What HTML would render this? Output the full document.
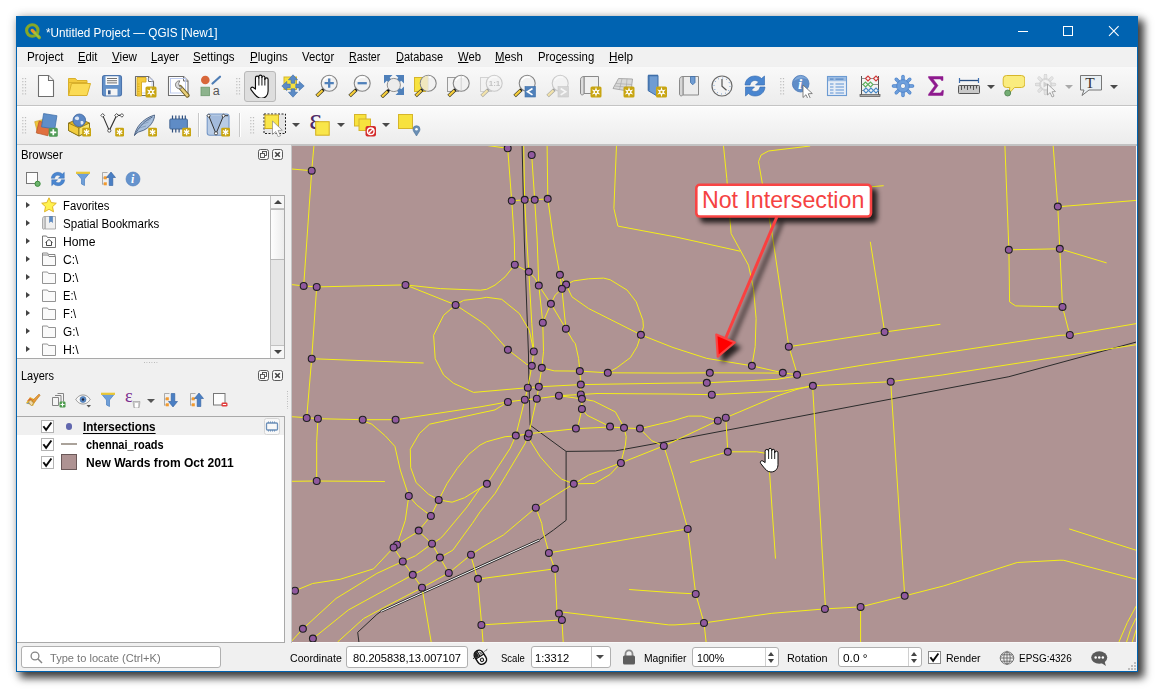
<!DOCTYPE html>
<html lang="en">
<head>
<meta charset="utf-8">
<title>*Untitled Project — QGIS [New1]</title>
<style>
*{box-sizing:border-box;margin:0;padding:0}
html,body{width:1155px;height:689px;overflow:hidden;background:#fff}
body{font-family:"Liberation Sans",sans-serif;font-size:12px;color:#000;position:relative}
.abs{position:absolute}
#win{position:absolute;left:16px;top:16px;width:1122px;height:656px;background:#F0F0F0;border:1px solid #0063B1;box-shadow:5px 5px 8px 1px rgba(0,0,0,.74), 0 0 10px rgba(0,0,0,.16)}
#title{position:absolute;left:16px;top:16px;width:1122px;height:31px;background:#0063B1;color:#fff}
#title .t{position:absolute;left:30px;top:8px;font-size:12px;white-space:nowrap;letter-spacing:-0.1px}
#menu{position:absolute;left:17px;top:47px;width:1120px;height:19px;background:#F1F1F1}
#menu span{position:absolute;top:3px;font-size:12px;white-space:nowrap}
#menu u{text-decoration-thickness:1px;text-underline-offset:1px}
.map{position:absolute;left:292px;top:146px}
#mapframe{position:absolute;left:291px;top:144px;width:846px;height:499px;background:#f8f8f8;border-top:2px solid #c2c2c2;border-left:1px solid #c6c6c6}
.tb{position:absolute;left:17px;width:1120px;background:#F0F0F0}
.grip{position:absolute;width:3px;height:18px;background-image:radial-gradient(circle,#b8b8b8 0.6px,transparent 0.9px);background-size:2px 2px}
.ic{position:absolute;width:24px;height:24px}
.dd{position:absolute;width:0;height:0;border-left:4px solid transparent;border-right:4px solid transparent;border-top:4.2px solid #4a4a4a}
.tx{font-size:12px;white-space:nowrap;line-height:14px;transform-origin:0 50%}
.st{font-size:11px}
.white{position:absolute;background:#fff;border:1px solid #a9a9a9}
.row{position:absolute;left:0;height:18px;font-size:12px;white-space:nowrap}
.sb{position:absolute;font-size:12px;white-space:nowrap;top:651px}
.inp{position:absolute;background:#fff;border:1px solid #ababab;border-radius:2px;height:21px;top:647px;font-size:12px;padding:3px 0 0 5px;white-space:nowrap}
#ttl{transform:scaleX(0.9772)}
#m0{transform:scaleX(0.9793)}
#m1{transform:scaleX(0.9371)}
#m2{transform:scaleX(0.9685)}
#m3{transform:scaleX(0.9324)}
#m4{transform:scaleX(0.9591)}
#m5{transform:scaleX(0.9625)}
#m6{transform:scaleX(0.9458)}
#m7{transform:scaleX(0.8852)}
#m8{transform:scaleX(0.9168)}
#m9{transform:scaleX(0.9400)}
#m10{transform:scaleX(0.9435)}
#m11{transform:scaleX(0.9465)}
#m12{transform:scaleX(0.9762)}
#pb{transform:scaleX(0.9474)}
#r0{transform:scaleX(0.9380)}
#r1{transform:scaleX(0.9625)}
#r2{transform:scaleX(1.0151)}
#r3{transform:scaleX(1.0102)}
#r4{transform:scaleX(1.0102)}
#r5{transform:scaleX(0.9338)}
#r6{transform:scaleX(0.9429)}
#r7{transform:scaleX(0.9803)}
#r8{transform:scaleX(1.0232)}
#pl{transform:scaleX(0.9131)}
#b1{transform:scaleX(0.9718)}
#b2{transform:scaleX(0.9161)}
#b3{transform:scaleX(1.0044)}
#loc{transform:scaleX(1.0077)}
#s1{transform:scaleX(0.9623)}
#s2{transform:scaleX(1.0088)}
#s3{transform:scaleX(0.8645)}
#s4{transform:scaleX(1.0132)}
#s5{transform:scaleX(0.9392)}
#s6{transform:scaleX(0.9701)}
#s7{transform:scaleX(0.9882)}
#s8{transform:scaleX(1.0813)}
#s9{transform:scaleX(0.9590)}
#s10{transform:scaleX(0.9072)}
</style>
</head>
<body>
<div id="win"></div>
<div id="title"></div>
<svg class="abs" style="left:24px;top:22px" width="18" height="18" viewBox="0 0 18 18"><circle cx="8.300" cy="8.500" r="5.700" fill="none" stroke="#86A828" stroke-width="3.100"/><path d="M8.300 8.500L15.300 15.500" stroke="#8DB22C" stroke-width="3.300" stroke-linecap="round"/><path d="M8 8.200L10.500 10.700" stroke="#F0902A" stroke-width="2.600" stroke-linecap="round"/><path d="M10.500 10.700L14.800 15" stroke="#A3C644" stroke-width="1.600" stroke-linecap="round"/></svg>
<svg class="abs" style="left:1000px;top:16px" width="138" height="31" viewBox="0 0 138 31"><g stroke="#fff" stroke-width="1" fill="none"><path d="M18 15.500h10"/><rect x="63.500" y="10.500" width="9" height="9"/><path d="M109 10.200l9.600 9.600M118.600 10.200l-9.600 9.600" stroke-width="1.100"/></g></svg>
<div id="menu"></div>

<div class="tb" style="top:67px;height:39px;background:linear-gradient(#f9f9f9,#ececec);border-bottom:1px solid #c4c4c4"></div>
<div class="tb" style="top:106px;height:39px;background:linear-gradient(#fbfbfb,#ececec);border-bottom:1px solid #c9c9c9;border-top:1px solid #fff"></div>
<svg class="abs" style="left:22px;top:77px" width="5" height="19" viewBox="0 0 5 19"><rect x="0.2" y="1.00" width="1.2" height="1.2" fill="#bdbdbd"/><rect x="2.9" y="1.00" width="1.2" height="1.2" fill="#bdbdbd"/><rect x="0.2" y="4.05" width="1.2" height="1.2" fill="#bdbdbd"/><rect x="2.9" y="4.05" width="1.2" height="1.2" fill="#bdbdbd"/><rect x="0.2" y="7.10" width="1.2" height="1.2" fill="#bdbdbd"/><rect x="2.9" y="7.10" width="1.2" height="1.2" fill="#bdbdbd"/><rect x="0.2" y="10.15" width="1.2" height="1.2" fill="#bdbdbd"/><rect x="2.9" y="10.15" width="1.2" height="1.2" fill="#bdbdbd"/><rect x="0.2" y="13.20" width="1.2" height="1.2" fill="#bdbdbd"/><rect x="2.9" y="13.20" width="1.2" height="1.2" fill="#bdbdbd"/><rect x="0.2" y="16.25" width="1.2" height="1.2" fill="#bdbdbd"/><rect x="2.9" y="16.25" width="1.2" height="1.2" fill="#bdbdbd"/></svg>
<svg class="abs" style="left:236px;top:77px" width="5" height="19" viewBox="0 0 5 19"><rect x="0.2" y="1.00" width="1.2" height="1.2" fill="#bdbdbd"/><rect x="2.9" y="1.00" width="1.2" height="1.2" fill="#bdbdbd"/><rect x="0.2" y="4.05" width="1.2" height="1.2" fill="#bdbdbd"/><rect x="2.9" y="4.05" width="1.2" height="1.2" fill="#bdbdbd"/><rect x="0.2" y="7.10" width="1.2" height="1.2" fill="#bdbdbd"/><rect x="2.9" y="7.10" width="1.2" height="1.2" fill="#bdbdbd"/><rect x="0.2" y="10.15" width="1.2" height="1.2" fill="#bdbdbd"/><rect x="2.9" y="10.15" width="1.2" height="1.2" fill="#bdbdbd"/><rect x="0.2" y="13.20" width="1.2" height="1.2" fill="#bdbdbd"/><rect x="2.9" y="13.20" width="1.2" height="1.2" fill="#bdbdbd"/><rect x="0.2" y="16.25" width="1.2" height="1.2" fill="#bdbdbd"/><rect x="2.9" y="16.25" width="1.2" height="1.2" fill="#bdbdbd"/></svg>
<div class="abs" style="left:244px;top:71px;width:32px;height:31px;background:#dedede;border:1px solid #b9b9b9;border-radius:3px"></div>
<svg class="abs" style="left:780px;top:77px" width="5" height="19" viewBox="0 0 5 19"><rect x="0.2" y="1.00" width="1.2" height="1.2" fill="#bdbdbd"/><rect x="2.9" y="1.00" width="1.2" height="1.2" fill="#bdbdbd"/><rect x="0.2" y="4.05" width="1.2" height="1.2" fill="#bdbdbd"/><rect x="2.9" y="4.05" width="1.2" height="1.2" fill="#bdbdbd"/><rect x="0.2" y="7.10" width="1.2" height="1.2" fill="#bdbdbd"/><rect x="2.9" y="7.10" width="1.2" height="1.2" fill="#bdbdbd"/><rect x="0.2" y="10.15" width="1.2" height="1.2" fill="#bdbdbd"/><rect x="2.9" y="10.15" width="1.2" height="1.2" fill="#bdbdbd"/><rect x="0.2" y="13.20" width="1.2" height="1.2" fill="#bdbdbd"/><rect x="2.9" y="13.20" width="1.2" height="1.2" fill="#bdbdbd"/><rect x="0.2" y="16.25" width="1.2" height="1.2" fill="#bdbdbd"/><rect x="2.9" y="16.25" width="1.2" height="1.2" fill="#bdbdbd"/></svg>
<svg class="ic" style="left:33.8px;top:74px;width:24px;height:24px" viewBox="0 0 24 24"><path d="M4.5 1.5h10l5 5v16h-15z" fill="#fff" stroke="#6e6e6e" stroke-width="1.1" stroke-linejoin="round"/><path d="M14.5 1.5v5h5" fill="#f4f4f4" stroke="#6e6e6e" stroke-width="1.1" stroke-linejoin="round"/></svg>
<svg class="ic" style="left:66.8px;top:74px;width:24px;height:24px" viewBox="0 0 24 24"><path d="M1.5 4.5h7l1.5 2h10v3h-18.5z" fill="#F4CB3E" stroke="#D9B02C" stroke-width="1"/><path d="M1.5 21.5V8.5h18.5" fill="#F4CB3E" stroke="#D9B02C"/><path d="M1.5 21.5l3-12h19l-3.5 12z" fill="#FBDB55" stroke="#D9B02C" stroke-width="1" stroke-linejoin="round"/></svg>
<svg class="ic" style="left:99.8px;top:74px;width:24px;height:24px" viewBox="0 0 24 24"><rect x="2.500" y="1.500" width="19" height="20.500" rx="2.200" fill="#6391C9" stroke="#4C74AC" stroke-width="1.100"/><rect x="5.500" y="2.300" width="13" height="8.700" fill="#fafafa"/><path d="M7 4.500h10M7 6.700h10M7 8.900h10" stroke="#333" stroke-width=".7"/><rect x="6" y="14.800" width="11.500" height="6.700" fill="#f5f5f5"/><rect x="8" y="16.300" width="2.600" height="4" fill="#3f5f8f"/></svg>
<svg class="ic" style="left:133px;top:74px;width:24px;height:24px" viewBox="0 0 24 24"><path d="M2.5 2.5h13l5 5v14h-18z" fill="#fff" stroke="#6e6e6e" stroke-width="1.1" stroke-linejoin="round"/><path d="M15.500 2.500v5h5" fill="#fff" stroke="#6e6e6e" stroke-width="1"/><rect x="6" y="5" width="13" height="14" fill="none" stroke="#b9c7ee" stroke-width=".8"/><path d="M4 3.500h9v4.500h-4.500v14h-4.500z" fill="#F6CC3C" stroke="#D6A91E" stroke-width=".9"/><path d="M4.500 10h2M4.500 12.500h2M4.500 15h2M4.500 17.500h2M4.500 20h2" stroke="#D6A91E" stroke-width=".8"/><rect x="12.5" y="12.5" width="11" height="11" rx="1.6" fill="#C8A512"/><polygon points="18.00,13.10 19.05,16.18 22.24,15.55 20.10,18.00 22.24,20.45 19.05,19.82 18.00,22.90 16.95,19.82 13.76,20.45 15.90,18.00 13.76,15.55 16.95,16.18" fill="#fff"/><circle cx="18.0" cy="18.0" r="1.15" fill="#C8A512"/></svg>
<svg class="ic" style="left:166px;top:74px;width:24px;height:24px" viewBox="0 0 24 24"><path d="M2.500 2.500h15l4.500 4.500v14.500h-19.500z" fill="#fff" stroke="#6e6e6e" stroke-width="1.1" stroke-linejoin="round"/><path d="M17.500 2.500v4.500h4.500" fill="#fff" stroke="#6e6e6e"/><rect x="4.500" y="4.500" width="15" height="14.500" fill="none" stroke="#b9c7ee" stroke-width=".9"/><path d="M14 13l7.500 8.500" stroke="#6b5a1e" stroke-width="4.200" stroke-linecap="round"/><path d="M14 13l7.300 8.300" stroke="#E9CF7A" stroke-width="2.600" stroke-linecap="round"/><path d="M13.800 6.800a4 4 0 1 0 2.500 6.800l-2.800-1.200l-.9-2.700z" fill="#ddd" stroke="#777" stroke-width=".9"/></svg>
<svg class="ic" style="left:198.5px;top:74px;width:24px;height:24px" viewBox="0 0 24 24"><circle cx="6.300" cy="6" r="4.300" fill="#D8673A"/><path d="M13.500 9.500l7.500-6.800" stroke="#4E7DB5" stroke-width="2.200" stroke-linecap="round"/><rect x="2" y="13.200" width="8.500" height="8.500" fill="#8DB38D" stroke="#6d996d" stroke-width=".8"/><text x="13.800" y="21.300" style="font-family:Liberation Sans,sans-serif;font-size:12.500px" fill="#555">a</text></svg>
<svg class="ic" style="left:247.8px;top:74px;width:24px;height:24px" viewBox="0 0 24 24"><g transform="translate(0.5,-1.2) scale(0.98)"><path d="M7.100 16.600V5.200a1.750 1.750 0 0 1 3.500 0V3.900a1.550 1.550 0 0 1 3.100 0V4.800a1.500 1.500 0 0 1 3 0V6.800a1.650 1.650 0 0 1 3.300 0V18.500c0 4-2.500 7.500-7 7.500c-3.500 0-5.500-2.500-7.500-5l-2.800-3.600c-1.200-1.600.6-3.400 2.200-2.400z" fill="#fff" stroke="#0a0a0a" stroke-width="1.150" stroke-linejoin="round"/><path d="M10.600 5V13M13.700 4.500V13M16.700 5.500V13" stroke="#0a0a0a" stroke-width="1"/></g></svg>
<svg class="ic" style="left:280.5px;top:74px;width:24px;height:24px" viewBox="0 0 24 24"><rect x="3" y="3" width="12.500" height="12.500" fill="#F7E23E" stroke="#D6B52A" stroke-width="1"/><g fill="#5A8AC6" stroke="#3F6EA8" stroke-width=".6"><path d="M12 .800l4.600 5h-2.700v3.400h-3.800V5.800H7.400z"/><path d="M12 23.200l4.600-5h-2.700v-3.400h-3.800v3.400H7.400z"/><path d="M.800 12l5-4.600v2.700h3.400v3.800H5.800v2.700z"/><path d="M23.200 12l-5-4.600v2.700h-3.400v3.800h3.400v2.700z"/></g></svg>
<svg class="ic" style="left:313.5px;top:74px;width:24px;height:24px" viewBox="0 0 24 24"><g><line x1="9.3" y1="15.7" x2="2.6" y2="22" stroke="#3a3a2a" stroke-width="3.6" stroke-linecap="butt"/><line x1="8.6" y1="16.3" x2="3" y2="21.6" stroke="#F7CE3A" stroke-width="2.2"/><circle cx="9.6" cy="15.3" r="1.4" fill="#111"/><circle cx="15.2" cy="9.2" r="8" fill="#f1f1f1" stroke="#858585" stroke-width="1.1"/><path d="M9.5 7 A6.5 6.5 0 0 1 18 3.5" fill="none" stroke="#fff" stroke-width="1.4"/></g><path d="M15.200 4.600v9.200M10.600 9.200h9.200" stroke="#4F80BA" stroke-width="2.300"/></svg>
<svg class="ic" style="left:346.5px;top:74px;width:24px;height:24px" viewBox="0 0 24 24"><g><line x1="9.3" y1="15.7" x2="2.6" y2="22" stroke="#3a3a2a" stroke-width="3.6" stroke-linecap="butt"/><line x1="8.6" y1="16.3" x2="3" y2="21.6" stroke="#F7CE3A" stroke-width="2.2"/><circle cx="9.6" cy="15.3" r="1.4" fill="#111"/><circle cx="15.2" cy="9.2" r="8" fill="#f1f1f1" stroke="#858585" stroke-width="1.1"/><path d="M9.5 7 A6.5 6.5 0 0 1 18 3.5" fill="none" stroke="#fff" stroke-width="1.4"/></g><path d="M10.600 9.200h9.200" stroke="#4F80BA" stroke-width="2.300"/></svg>
<svg class="ic" style="left:379.5px;top:74px;width:24px;height:24px" viewBox="0 0 24 24"><g fill="#4F80BA"><path d="M4 1h8.500l-2.800 2.800l3.200 3.200l-2.900 2.900l-3.200-3.200L4 9.500z"/><path d="M24 1h-8.500l2.800 2.800l-3.200 3.200l2.900 2.900l3.200-3.200L24 9.500z"/><path d="M24 21h-8.500l2.800-2.800l-3.200-3.200l2.900-2.900l3.200 3.200l2.800-2.800z"/></g><line x1="8.300" y1="16.700" x2="1.600" y2="23" stroke="#3a3a2a" stroke-width="3.600"/><line x1="7.600" y1="17.300" x2="2" y2="22.600" stroke="#F7CE3A" stroke-width="2.200"/><circle cx="8.600" cy="16.300" r="1.400" fill="#111"/><circle cx="13.800" cy="11" r="6.600" fill="#ececec" stroke="#909090" stroke-width="1"/><g fill="#4F80BA"><path d="M4 1h6l-2 2l2.500 2.500l-2.100 2.100L5.900 5.100L4 7z"/><path d="M24 1h-6l2 2l-2.500 2.500l2.100 2.100l2.500-2.500L24 7z"/><path d="M24 21h-6l2-2l-2.500-2.500l2.100-2.100l2.500 2.500l1.900-1.900z"/></g></svg>
<svg class="ic" style="left:412.5px;top:74px;width:24px;height:24px" viewBox="0 0 24 24"><rect x="1.500" y="3.500" width="11" height="14" fill="#F7E23E" stroke="#D6B52A"/><g><line x1="9.3" y1="15.7" x2="2.6" y2="22" stroke="#3a3a2a" stroke-width="3.6" stroke-linecap="butt"/><line x1="8.6" y1="16.3" x2="3" y2="21.6" stroke="#F7CE3A" stroke-width="2.2"/><circle cx="9.6" cy="15.3" r="1.4" fill="#111"/><circle cx="15.2" cy="9.2" r="8" fill="#f1f1f1" stroke="#858585" stroke-width="1.1"/><path d="M9.5 7 A6.5 6.5 0 0 1 18 3.5" fill="none" stroke="#fff" stroke-width="1.4"/></g><path d="M15.200 1.700a7.500 7.500 0 0 0 0 15z" fill="#EFE6B8" opacity=".9"/><path d="M15.200 1.500v15.400" stroke="#ddd" stroke-width=".6"/></svg>
<svg class="ic" style="left:445.5px;top:74px;width:24px;height:24px" viewBox="0 0 24 24"><rect x="1.500" y="3.500" width="11" height="14" fill="#f2f2f2" stroke="#9a9a9a"/><g><line x1="9.3" y1="15.7" x2="2.6" y2="22" stroke="#3a3a2a" stroke-width="3.6" stroke-linecap="butt"/><line x1="8.6" y1="16.3" x2="3" y2="21.6" stroke="#F7CE3A" stroke-width="2.2"/><circle cx="9.6" cy="15.3" r="1.4" fill="#111"/><circle cx="15.2" cy="9.2" r="8" fill="#f1f1f1" stroke="#858585" stroke-width="1.1"/><path d="M9.5 7 A6.5 6.5 0 0 1 18 3.5" fill="none" stroke="#fff" stroke-width="1.4"/></g><path d="M15.200 1.500v15.400" stroke="#c9c9c9" stroke-width=".8"/></svg>
<svg class="ic" style="left:478.5px;top:74px;width:24px;height:24px" viewBox="0 0 24 24"><g opacity=".38"><rect x="1.500" y="3.500" width="11" height="14" fill="#f2f2f2" stroke="#9a9a9a"/><g><line x1="9.3" y1="15.7" x2="2.6" y2="22" stroke="#3a3a2a" stroke-width="3.6" stroke-linecap="butt"/><line x1="8.6" y1="16.3" x2="3" y2="21.6" stroke="#F7CE3A" stroke-width="2.2"/><circle cx="9.6" cy="15.3" r="1.4" fill="#111"/><circle cx="15.2" cy="9.2" r="8" fill="#f1f1f1" stroke="#858585" stroke-width="1.1"/><path d="M9.5 7 A6.5 6.5 0 0 1 18 3.5" fill="none" stroke="#fff" stroke-width="1.4"/></g><text x="9.700" y="12.300" font-family="Liberation Sans,sans-serif" font-weight="bold" font-size="8" fill="#777">1:1</text></g></svg>
<svg class="ic" style="left:511.5px;top:74px;width:24px;height:24px" viewBox="0 0 24 24"><g><line x1="9.3" y1="15.7" x2="2.6" y2="22" stroke="#3a3a2a" stroke-width="3.6" stroke-linecap="butt"/><line x1="8.6" y1="16.3" x2="3" y2="21.6" stroke="#F7CE3A" stroke-width="2.2"/><circle cx="9.6" cy="15.3" r="1.4" fill="#111"/><circle cx="15.2" cy="9.2" r="8" fill="#f1f1f1" stroke="#858585" stroke-width="1.1"/><path d="M9.5 7 A6.5 6.5 0 0 1 18 3.5" fill="none" stroke="#fff" stroke-width="1.4"/></g><rect x="13" y="12.500" width="10.500" height="10.500" fill="#4F80BA" stroke="#3F6EA8" stroke-width=".6"/><path d="M20.500 14.500l-5 3.200l5 3.200" fill="none" stroke="#fff" stroke-width="1.700"/></svg>
<svg class="ic" style="left:544.5px;top:74px;width:24px;height:24px" viewBox="0 0 24 24"><g opacity=".38"><g><line x1="9.3" y1="15.7" x2="2.6" y2="22" stroke="#3a3a2a" stroke-width="3.6" stroke-linecap="butt"/><line x1="8.6" y1="16.3" x2="3" y2="21.6" stroke="#F7CE3A" stroke-width="2.2"/><circle cx="9.6" cy="15.3" r="1.4" fill="#111"/><circle cx="15.2" cy="9.2" r="8" fill="#f1f1f1" stroke="#858585" stroke-width="1.1"/><path d="M9.5 7 A6.5 6.5 0 0 1 18 3.5" fill="none" stroke="#fff" stroke-width="1.4"/></g><rect x="13" y="12.500" width="10.500" height="10.500" fill="#aaa" stroke="#888" stroke-width=".6"/><path d="M15.700 14.500l5 3.200l-5 3.200" fill="none" stroke="#fff" stroke-width="1.700"/></g></svg>
<svg class="ic" style="left:578px;top:74px;width:24px;height:24px" viewBox="0 0 24 24"><path d="M6 2.500h14.500v17H6z" fill="#f0f0f0" stroke="#8a8a8a"/><path d="M6 2.500c-3 0-3.500 2-3.500 3V19c0 2.500 3.500 2.500 3.500 0z" fill="#dcdcdc" stroke="#8a8a8a"/><rect x="12.5" y="12.5" width="11" height="11" rx="1.6" fill="#C8A512"/><polygon points="18.00,13.10 19.05,16.18 22.24,15.55 20.10,18.00 22.24,20.45 19.05,19.82 18.00,22.90 16.95,19.82 13.76,20.45 15.90,18.00 13.76,15.55 16.95,16.18" fill="#fff"/><circle cx="18.0" cy="18.0" r="1.15" fill="#C8A512"/></svg>
<svg class="ic" style="left:611px;top:74px;width:24px;height:24px" viewBox="0 0 24 24"><path d="M2 14.500l5.500-10l14 .5l-1.500 12.500z" fill="#d9d9d9" stroke="#9a9a9a" stroke-width=".8"/><path d="M5 9.500l16 1M3.500 12l16.800 1.500M11 4.700l-2.500 11M16 4.800l-1 12" stroke="#aaa" stroke-width=".7"/><rect x="12.5" y="12.5" width="11" height="11" rx="1.6" fill="#C8A512"/><polygon points="18.00,13.10 19.05,16.18 22.24,15.55 20.10,18.00 22.24,20.45 19.05,19.82 18.00,22.90 16.95,19.82 13.76,20.45 15.90,18.00 13.76,15.55 16.95,16.18" fill="#fff"/><circle cx="18.0" cy="18.0" r="1.15" fill="#C8A512"/></svg>
<svg class="ic" style="left:644.5px;top:74px;width:24px;height:24px" viewBox="0 0 24 24"><path d="M3.200 1.500h9.800v17.500l-2 2.300l-7.800-4.600z" fill="#6F9CD2" stroke="#3F6EA8" stroke-width="1" stroke-linejoin="round"/><path d="M3.200 1.500h9.800" stroke="#3F6EA8" stroke-width="1.600"/><path d="M3.900 2v14.500" stroke="#3F6EA8" stroke-width="1.200"/><rect x="11" y="12.5" width="11" height="11" rx="1.6" fill="#C8A512"/><polygon points="16.50,13.10 17.55,16.18 20.74,15.55 18.60,18.00 20.74,20.45 17.55,19.82 16.50,22.90 15.45,19.82 12.26,20.45 14.40,18.00 12.26,15.55 15.45,16.18" fill="#fff"/><circle cx="16.5" cy="18.0" r="1.15" fill="#C8A512"/></svg>
<svg class="ic" style="left:677px;top:74px;width:24px;height:24px" viewBox="0 0 24 24"><path d="M6 2.500h15.500v18.500H6z" fill="#ececec" stroke="#8a8a8a"/><path d="M6 2.500c-3 0-3.500 2-3.500 3V20c0 2.500 3.500 2.500 3.500 0z" fill="#d6d6d6" stroke="#8a8a8a"/><path d="M13.500 2.500h4.500v6l-2.250 2.300l-2.250-2.300z" fill="#6F9CD2" stroke="#3F6EA8" stroke-width=".8"/></svg>
<svg class="ic" style="left:710px;top:74px;width:24px;height:24px" viewBox="0 0 24 24"><circle cx="12" cy="12" r="10" fill="#f4f4f4" stroke="#6a6a6a" stroke-width="1.200"/><circle cx="12" cy="12" r="8" fill="none" stroke="#5A8AC6" stroke-width="1" stroke-dasharray=".9 3.290"/><path d="M12 5v7.300l4.500 4" fill="none" stroke="#555" stroke-width="1.200"/></svg>
<svg class="ic" style="left:742.7px;top:74px;width:24px;height:24px" viewBox="0 0 24 24"><g fill="#4A86D0" stroke="#2F66AD" stroke-width=".6"><path d="M2 11C2.500 5 7 2 12 2c3 0 5 1 6.500 2.500L21.500 2v9h-9l3-3c-1-1-2.200-1.500-3.700-1.500c-2.500 0-4.300 1.500-4.800 4.500z"/><path d="M22 13c-.5 6-5 9-10 9c-3 0-5-1-6.500-2.500L2.500 22v-9h9l-3 3c1 1 2.200 1.500 3.700 1.500c2.500 0 4.300-1.500 4.800-4.500z"/></g></svg>
<svg class="ic" style="left:791.3px;top:74px;width:24px;height:24px" viewBox="0 0 24 24"><circle cx="9.700" cy="9.700" r="8.300" fill="#5F8DC8" stroke="#4A79B8" stroke-width=".8"/><path d="M3 7a7.500 7.500 0 0 1 13.500-1.500c-4-2-9-1.500-13.500 1.500z" fill="#8FB3E0" opacity=".7"/><text x="7" y="15" font-family="Liberation Serif,serif" font-style="italic" font-weight="bold" font-size="15" fill="#fff">i</text><path d="M12 11l0 12.500l3-2.800l2.300 5l2.200-1l-2.300-4.900l4.100-.3z" fill="#fff" stroke="#666" stroke-width=".8" stroke-linejoin="round"/></svg>
<svg class="ic" style="left:824.7px;top:74px;width:24px;height:24px" viewBox="0 0 24 24"><rect x="2.500" y="2.500" width="19" height="19" fill="#E6EDF6" stroke="#6C9BD2" stroke-width="1.100"/><rect x="3" y="3" width="18" height="4.200" fill="#9DBDE3"/><path d="M5 5.200h3.500M10.500 5.200h8" stroke="#5A8AC6" stroke-width="1.300"/><path d="M5 10h3.500M10.500 10h8.500M5 13h3.500M10.500 13h8.500M5 16h3.500M10.500 16h8.500M5 19h3.500M10.500 19h8.500" stroke="#5F93D4" stroke-width="1.200"/></svg>
<svg class="ic" style="left:858px;top:74px;width:24px;height:24px" viewBox="0 0 24 24"><path d="M3.500 2v19M20.500 2v19" stroke="#555" stroke-width="1"/><path d="M3.500 4.500h17M3.500 10.500h17M3.500 16.500h17" stroke="#777" stroke-width=".8"/><rect x="2" y="20.500" width="20" height="2" fill="#aaa" stroke="#555" stroke-width=".7"/><path d="M7.5 4.5l2.500-2.500l2.500 2.500l-2.500 2.500z" fill="#f4f4f4" stroke="#D23A3A" stroke-width="1.100"/><path d="M15.5 4.5l2.500-2.500l2.500 2.500l-2.500 2.500z" fill="#f4f4f4" stroke="#D23A3A" stroke-width="1.100"/><path d="M5.0 10.5l2.500-2.500l2.500 2.500l-2.500 2.500z" fill="#f4f4f4" stroke="#5DB05D" stroke-width="1.100"/><path d="M10.0 10.5l2.500-2.500l2.500 2.500l-2.500 2.500z" fill="#f4f4f4" stroke="#5DB05D" stroke-width="1.100"/><path d="M5.5 16.5l2.500-2.500l2.500 2.500l-2.500 2.500z" fill="#f4f4f4" stroke="#4A8AC8" stroke-width="1.100"/><path d="M10.5 16.5l2.500-2.500l2.500 2.500l-2.500 2.500z" fill="#f4f4f4" stroke="#4A8AC8" stroke-width="1.100"/><path d="M15.5 16.5l2.500-2.500l2.500 2.500l-2.500 2.500z" fill="#f4f4f4" stroke="#4A8AC8" stroke-width="1.100"/></svg>
<svg class="ic" style="left:890.7px;top:74px;width:24px;height:24px" viewBox="0 0 24 24"><line x1="16.80" y1="12.00" x2="21.60" y2="12.00" stroke="#4A80C8" stroke-width="3.400" stroke-linecap="round"/><line x1="15.39" y1="15.39" x2="18.79" y2="18.79" stroke="#4A80C8" stroke-width="3.400" stroke-linecap="round"/><line x1="12.00" y1="16.80" x2="12.00" y2="21.60" stroke="#4A80C8" stroke-width="3.400" stroke-linecap="round"/><line x1="8.61" y1="15.39" x2="5.21" y2="18.79" stroke="#4A80C8" stroke-width="3.400" stroke-linecap="round"/><line x1="7.20" y1="12.00" x2="2.40" y2="12.00" stroke="#4A80C8" stroke-width="3.400" stroke-linecap="round"/><line x1="8.61" y1="8.61" x2="5.21" y2="5.21" stroke="#4A80C8" stroke-width="3.400" stroke-linecap="round"/><line x1="12.00" y1="7.20" x2="12.00" y2="2.40" stroke="#4A80C8" stroke-width="3.400" stroke-linecap="round"/><line x1="15.39" y1="8.61" x2="18.79" y2="5.21" stroke="#4A80C8" stroke-width="3.400" stroke-linecap="round"/><line x1="16.80" y1="12.00" x2="21.60" y2="12.00" stroke="#6E9FDC" stroke-width="2.200" stroke-linecap="round"/><line x1="15.39" y1="15.39" x2="18.79" y2="18.79" stroke="#6E9FDC" stroke-width="2.200" stroke-linecap="round"/><line x1="12.00" y1="16.80" x2="12.00" y2="21.60" stroke="#6E9FDC" stroke-width="2.200" stroke-linecap="round"/><line x1="8.61" y1="15.39" x2="5.21" y2="18.79" stroke="#6E9FDC" stroke-width="2.200" stroke-linecap="round"/><line x1="7.20" y1="12.00" x2="2.40" y2="12.00" stroke="#6E9FDC" stroke-width="2.200" stroke-linecap="round"/><line x1="8.61" y1="8.61" x2="5.21" y2="5.21" stroke="#6E9FDC" stroke-width="2.200" stroke-linecap="round"/><line x1="12.00" y1="7.20" x2="12.00" y2="2.40" stroke="#6E9FDC" stroke-width="2.200" stroke-linecap="round"/><line x1="15.39" y1="8.61" x2="18.79" y2="5.21" stroke="#6E9FDC" stroke-width="2.200" stroke-linecap="round"/><circle cx="12" cy="12" r="6.3" fill="#6E9FDC" stroke="#4A80C8" stroke-width=".8"/><circle cx="12" cy="12" r="2.6" fill="#f2f2f2" stroke="#4A80C8" stroke-width=".8"/></svg>
<svg class="ic" style="left:923.7px;top:74px;width:24px;height:24px" viewBox="0 0 24 24"><path d="M4.500 2.500h14.500v4h-1.500c-.3-1.200-1-1.500-2.500-1.500H9l5 6.500l-5.500 7.500h6.500c1.800 0 2.500-.6 3-2.500h1.500l-.5 5H4.500v-1.200l6.300-8.500L4.500 3.800z" fill="#8E1A8E" stroke="#8E1A8E" stroke-width=".5"/></svg>
<svg class="ic" style="left:957px;top:74px;width:24px;height:24px" viewBox="0 0 24 24"><path d="M2.500 6.500h19" stroke="#274D80" stroke-width="1.300"/><path d="M2.500 4v5M21.500 4v5" stroke="#3E6FB0" stroke-width="1.200"/><rect x="1.500" y="11.500" width="21" height="8" rx=".8" fill="#c9c9c9" stroke="#555" stroke-width="1"/><path d="M4.500 12v4M7.500 12v2.500M10.500 12v4M13.500 12v2.500M16.500 12v4M19.500 12v2.500" stroke="#444" stroke-width=".9"/></svg>
<svg class="ic" style="left:1001.3px;top:74px;width:24px;height:24px" viewBox="0 0 24 24"><path d="M5.500 1.500h15a3.300 3.300 0 0 1 3.300 3.300v5.400a3.300 3.300 0 0 1-3.300 3.300h-7l-5.500 6l.8-6h-3.300a3.300 3.300 0 0 1-3.300-3.300v-5.400a3.300 3.300 0 0 1 3.300-3.300z" fill="#FAEC7E" stroke="#D6B62A" stroke-width="1"/><circle cx="6.700" cy="19" r="3" fill="#74AD74" stroke="#4d7f4d" stroke-width=".8"/></svg>
<svg class="ic" style="left:1034.7px;top:74px;width:24px;height:24px" viewBox="0 0 24 24"><g opacity=".4"><line x1="15.00" y1="10.50" x2="19.50" y2="10.50" stroke="#999" stroke-width="3.400" stroke-linecap="round"/><line x1="13.68" y1="13.68" x2="16.86" y2="16.86" stroke="#999" stroke-width="3.400" stroke-linecap="round"/><line x1="10.50" y1="15.00" x2="10.50" y2="19.50" stroke="#999" stroke-width="3.400" stroke-linecap="round"/><line x1="7.32" y1="13.68" x2="4.14" y2="16.86" stroke="#999" stroke-width="3.400" stroke-linecap="round"/><line x1="6.00" y1="10.50" x2="1.50" y2="10.50" stroke="#999" stroke-width="3.400" stroke-linecap="round"/><line x1="7.32" y1="7.32" x2="4.14" y2="4.14" stroke="#999" stroke-width="3.400" stroke-linecap="round"/><line x1="10.50" y1="6.00" x2="10.50" y2="1.50" stroke="#999" stroke-width="3.400" stroke-linecap="round"/><line x1="13.68" y1="7.32" x2="16.86" y2="4.14" stroke="#999" stroke-width="3.400" stroke-linecap="round"/><line x1="15.00" y1="10.50" x2="19.50" y2="10.50" stroke="#d0d0d0" stroke-width="2.200" stroke-linecap="round"/><line x1="13.68" y1="13.68" x2="16.86" y2="16.86" stroke="#d0d0d0" stroke-width="2.200" stroke-linecap="round"/><line x1="10.50" y1="15.00" x2="10.50" y2="19.50" stroke="#d0d0d0" stroke-width="2.200" stroke-linecap="round"/><line x1="7.32" y1="13.68" x2="4.14" y2="16.86" stroke="#d0d0d0" stroke-width="2.200" stroke-linecap="round"/><line x1="6.00" y1="10.50" x2="1.50" y2="10.50" stroke="#d0d0d0" stroke-width="2.200" stroke-linecap="round"/><line x1="7.32" y1="7.32" x2="4.14" y2="4.14" stroke="#d0d0d0" stroke-width="2.200" stroke-linecap="round"/><line x1="10.50" y1="6.00" x2="10.50" y2="1.50" stroke="#d0d0d0" stroke-width="2.200" stroke-linecap="round"/><line x1="13.68" y1="7.32" x2="16.86" y2="4.14" stroke="#d0d0d0" stroke-width="2.200" stroke-linecap="round"/><circle cx="10.5" cy="10.5" r="6.0" fill="#d0d0d0" stroke="#999" stroke-width=".8"/><circle cx="10.5" cy="10.5" r="5" fill="#f2f2f2" stroke="#999" stroke-width=".8"/><path d="M8.500 7.500l5 3l-5 3z" fill="#999"/><path d="M12.5 10l0 11l2.600-2.400l2 4.400l1.900-.9l-2-4.300l3.500-.3z" fill="#fff" stroke="#222" stroke-width=".9" stroke-linejoin="round"/></g></svg>
<svg class="ic" style="left:1079px;top:74px;width:24px;height:24px" viewBox="0 0 24 24"><path d="M1.500 1.500h21v14.500h-12.500l-7 5.500l2-5.500h-3.500z" fill="#E9EFF3" stroke="#777" stroke-width="1"/><text x="6.300" y="13.800" font-family="Liberation Serif,serif" font-size="15.500" fill="#333">T</text></svg>
<div class="dd" style="left:986.7px;top:84.5px"></div>
<div class="dd" style="border-top-color:#a9a9a9;left:1065px;top:84.5px"></div>
<div class="dd" style="left:1110.3px;top:84.5px"></div>
<svg class="abs" style="left:22px;top:116px" width="5" height="19" viewBox="0 0 5 19"><rect x="0.2" y="1.00" width="1.2" height="1.2" fill="#bdbdbd"/><rect x="2.9" y="1.00" width="1.2" height="1.2" fill="#bdbdbd"/><rect x="0.2" y="4.05" width="1.2" height="1.2" fill="#bdbdbd"/><rect x="2.9" y="4.05" width="1.2" height="1.2" fill="#bdbdbd"/><rect x="0.2" y="7.10" width="1.2" height="1.2" fill="#bdbdbd"/><rect x="2.9" y="7.10" width="1.2" height="1.2" fill="#bdbdbd"/><rect x="0.2" y="10.15" width="1.2" height="1.2" fill="#bdbdbd"/><rect x="2.9" y="10.15" width="1.2" height="1.2" fill="#bdbdbd"/><rect x="0.2" y="13.20" width="1.2" height="1.2" fill="#bdbdbd"/><rect x="2.9" y="13.20" width="1.2" height="1.2" fill="#bdbdbd"/><rect x="0.2" y="16.25" width="1.2" height="1.2" fill="#bdbdbd"/><rect x="2.9" y="16.25" width="1.2" height="1.2" fill="#bdbdbd"/></svg>
<svg class="ic" style="left:33.8px;top:113px;width:24px;height:24px" viewBox="0 0 24 24"><rect x="2" y="7" width="12" height="12" fill="#F0C63A" stroke="#C9A11E" stroke-width=".6" transform="rotate(-14 8 13)"/><rect x="3.500" y="9.500" width="12" height="12" fill="#E0703F" stroke="#B04E25" stroke-width=".6" transform="rotate(14 9.500 15.500)"/><rect x="8.500" y="1.500" width="13.500" height="13.500" fill="#5F8FC9" stroke="#3F6EA8" stroke-width=".7" transform="rotate(9 15 8)"/><rect x="14.800" y="14.800" width="9" height="9" rx="1.500" fill="#4F9A55"/><path d="M19.300 16.300v6M16.300 19.300h6" stroke="#fff" stroke-width="1.700"/></svg>
<svg class="ic" style="left:66.8px;top:113px;width:24px;height:24px" viewBox="0 0 24 24"><path d="M1.500 10l10.500-4.500l10.500 4.500v7.500l-10.500 5.500l-10.500-5.500z" fill="#E3B41F" stroke="#7a6510" stroke-width=".8" stroke-linejoin="round"/><path d="M1.500 10l10.500 5v8l-10.500-5.500z" fill="#F1CC3D" stroke="#7a6510" stroke-width=".7"/><path d="M12 15l10.500-5v7.500l-10.500 5.500z" fill="#F7E36A" stroke="#7a6510" stroke-width=".7"/><circle cx="12.300" cy="7.300" r="6.300" fill="#5B87C5" stroke="#3c639c" stroke-width=".8"/><path d="M8 4.500c1.500-1.500 3.500-1.200 4 .3s-.8 2.800-2.200 2.300s-2.500-1-1.800-2.600zM13.500 8.500c1.200-.8 3.300-.3 3 1.200s-1.500 2.200-2.700 1.500z" fill="#dfe8f5"/><rect x="15.2" y="14.8" width="8.800" height="8.800" rx="1.300" fill="#C8A512"/><g stroke="#fff" stroke-width="1.350"><line x1="19.60" y1="22.30" x2="19.60" y2="16.10"/><line x1="16.92" y1="20.75" x2="22.28" y2="17.65"/><line x1="16.92" y1="17.65" x2="22.28" y2="20.75"/></g></svg>
<svg class="ic" style="left:99.8px;top:113px;width:24px;height:24px" viewBox="0 0 24 24"><path d="M2.700 2.400l6.600 15.200l7.300-15.200h5.900" fill="none" stroke="#333" stroke-width="1.100"/><g fill="#fff" stroke="#333" stroke-width=".8"><rect x="1.400" y="1.100" width="2.600" height="2.600" transform="rotate(45 2.700 2.400)"/><rect x="15.300" y="1.100" width="2.600" height="2.600" transform="rotate(45 16.600 2.400)"/><rect x="20.600" y="1.100" width="2.600" height="2.600" transform="rotate(45 21.900 2.400)"/><circle cx="9.300" cy="17.600" r="1.600"/></g><rect x="15.2" y="14.8" width="8.800" height="8.800" rx="1.300" fill="#C8A512"/><g stroke="#fff" stroke-width="1.350"><line x1="19.60" y1="22.30" x2="19.60" y2="16.10"/><line x1="16.92" y1="20.75" x2="22.28" y2="17.65"/><line x1="16.92" y1="17.65" x2="22.28" y2="20.75"/></g></svg>
<svg class="ic" style="left:133px;top:113px;width:24px;height:24px" viewBox="0 0 24 24"><path d="M1.500 22.500c1-7 7-16.500 20-20.500c.5 4-4 14-14.500 16.500c-2 .5-4 2-5.500 4z" fill="#A9C0DC" stroke="#4a5f7f" stroke-width=".9" stroke-linejoin="round"/><path d="M1.500 22.500C6 13.500 12 7.500 19.500 4" fill="none" stroke="#4a5f7f" stroke-width=".9"/><path d="M6 15l7-2M8.500 11.500l7-2.500M11.500 8.500l6-2" stroke="#6f88ab" stroke-width=".6"/><rect x="15.2" y="14.8" width="8.800" height="8.800" rx="1.300" fill="#C8A512"/><g stroke="#fff" stroke-width="1.350"><line x1="19.60" y1="22.30" x2="19.60" y2="16.10"/><line x1="16.92" y1="20.75" x2="22.28" y2="17.65"/><line x1="16.92" y1="17.65" x2="22.28" y2="20.75"/></g></svg>
<svg class="ic" style="left:166.9px;top:113px;width:24px;height:24px" viewBox="0 0 24 24"><rect x="2.800" y="6" width="17.600" height="10" rx="1" fill="#5F8CC6" stroke="#3f628f" stroke-width=".9"/><path d="M5.500 2.500v3.500M8.800 2.500v3.500M12.100 2.500v3.500M15.400 2.500v3.500M18.300 2.500v3.500M5.500 16v3.500M8.800 16v3.500M12.100 16v3.500" stroke="#2f4f7f" stroke-width="1.200"/><rect x="15.2" y="14.8" width="8.800" height="8.800" rx="1.300" fill="#C8A512"/><g stroke="#fff" stroke-width="1.350"><line x1="19.60" y1="22.30" x2="19.60" y2="16.10"/><line x1="16.92" y1="20.75" x2="22.28" y2="17.65"/><line x1="16.92" y1="17.65" x2="22.28" y2="20.75"/></g></svg>
<svg class="ic" style="left:206px;top:113px;width:24px;height:24px" viewBox="0 0 24 24"><rect x="1.200" y="1" width="21.800" height="21.300" rx="2.500" fill="#B9CCE5" stroke="#7496C6" stroke-width="1.100"/><path d="M2.700 2.700l7.300 18l7.500-18h4.500" fill="#A3BBDC" stroke="#333" stroke-width="1"/><g fill="#fff" stroke="#333" stroke-width=".8"><rect x="1.500" y="1.500" width="2.400" height="2.400" transform="rotate(45 2.700 2.700)"/><rect x="16.300" y="1.500" width="2.400" height="2.400" transform="rotate(45 17.500 2.700)"/><circle cx="10" cy="20.300" r="1.600"/></g><rect x="15.2" y="14.8" width="8.800" height="8.800" rx="1.300" fill="#C8A512"/><g stroke="#fff" stroke-width="1.350"><line x1="19.60" y1="22.30" x2="19.60" y2="16.10"/><line x1="16.92" y1="20.75" x2="22.28" y2="17.65"/><line x1="16.92" y1="17.65" x2="22.28" y2="20.75"/></g></svg>
<svg class="ic" style="left:263.2px;top:113px;width:24px;height:24px" viewBox="0 0 24 24"><rect x="1" y="1" width="21.500" height="19.500" fill="#e6e6e6" stroke="#222" stroke-width="1" stroke-dasharray="2 1.500"/><rect x="2" y="2" width="13.500" height="13.500" fill="#F9E64A" stroke="#D2AE1E" stroke-width="1"/><path d="M9.500 8l0 13.500l3.200-3l2.500 5.300l2.300-1.100l-2.500-5.200l4.300-.3z" fill="#fff" stroke="#777" stroke-width=".6" stroke-linejoin="round"/></svg>
<svg class="ic" style="left:306.8px;top:113px;width:24px;height:24px" viewBox="0 0 24 24"><text x="2.200" y="15.700" font-family="Liberation Serif,serif" font-size="29" fill="#4E2A66">ε</text><rect x="8.700" y="8.700" width="13.500" height="13.500" fill="#F9E64A" stroke="#D2AE1E" stroke-width="1"/></svg>
<svg class="ic" style="left:353px;top:113px;width:24px;height:24px" viewBox="0 0 24 24"><rect x="1.500" y="1.500" width="11.500" height="11.500" fill="#F7E23E" stroke="#D6B52A"/><rect x="6" y="6" width="11.500" height="11.500" fill="#F7E23E" stroke="#D6B52A"/><rect x="12.500" y="13" width="10.500" height="10.500" rx="2" fill="#D42A2A"/><circle cx="17.750" cy="18.250" r="3.300" fill="none" stroke="#fff" stroke-width="1.400"/><path d="M15.500 20.500l4.500-4.500" stroke="#fff" stroke-width="1.400"/></svg>
<svg class="ic" style="left:396.9px;top:113px;width:24px;height:24px" viewBox="0 0 24 24"><rect x="1.500" y="1.500" width="14" height="14" fill="#F7E23E" stroke="#D6B52A"/><path d="M19.500 23c-1.500-3-3.500-4.500-3.500-6.800a3.500 3.500 0 0 1 7 0c0 2.300-2 3.800-3.500 6.800z" fill="#6A8FB5" stroke="#4a6f95" stroke-width=".6"/><circle cx="19.500" cy="16.200" r="1.300" fill="#fff"/></svg>
<div class="abs" style="left:198px;top:113px;width:1px;height:24px;background:#c8c8c8"></div><div class="abs" style="left:199px;top:113px;width:1px;height:24px;background:#fff"></div>
<div class="abs" style="left:238.5px;top:113px;width:1px;height:24px;background:#c8c8c8"></div><div class="abs" style="left:239.5px;top:113px;width:1px;height:24px;background:#fff"></div>
<svg class="abs" style="left:250px;top:116px" width="5" height="19" viewBox="0 0 5 19"><rect x="0.2" y="1.00" width="1.2" height="1.2" fill="#bdbdbd"/><rect x="2.9" y="1.00" width="1.2" height="1.2" fill="#bdbdbd"/><rect x="0.2" y="4.05" width="1.2" height="1.2" fill="#bdbdbd"/><rect x="2.9" y="4.05" width="1.2" height="1.2" fill="#bdbdbd"/><rect x="0.2" y="7.10" width="1.2" height="1.2" fill="#bdbdbd"/><rect x="2.9" y="7.10" width="1.2" height="1.2" fill="#bdbdbd"/><rect x="0.2" y="10.15" width="1.2" height="1.2" fill="#bdbdbd"/><rect x="2.9" y="10.15" width="1.2" height="1.2" fill="#bdbdbd"/><rect x="0.2" y="13.20" width="1.2" height="1.2" fill="#bdbdbd"/><rect x="2.9" y="13.20" width="1.2" height="1.2" fill="#bdbdbd"/><rect x="0.2" y="16.25" width="1.2" height="1.2" fill="#bdbdbd"/><rect x="2.9" y="16.25" width="1.2" height="1.2" fill="#bdbdbd"/></svg>
<div class="dd" style="left:292.1px;top:123px"></div>
<div class="dd" style="left:336.8px;top:123px"></div>
<div class="dd" style="left:381.8px;top:123px"></div>

<svg class="abs" style="left:258px;top:149px" width="25" height="11" viewBox="0 0 25 11"><rect x=".5" y=".5" width="10" height="10" rx="2" fill="#f8f8f8" stroke="#4a4a4a" stroke-width=".9"/><rect x="4.500" y="2.500" width="4" height="4" fill="none" stroke="#4a4a4a" stroke-width=".9"/><rect x="2.500" y="4.500" width="4" height="4" fill="#f8f8f8" stroke="#4a4a4a" stroke-width=".9"/><rect x="14.500" y=".5" width="10" height="10" rx="2" fill="#f8f8f8" stroke="#4a4a4a" stroke-width=".9"/><path d="M17.200 3.200l4.600 4.600M21.800 3.200l-4.600 4.600" stroke="#444" stroke-width="1.600"/></svg>
<svg class="abs" style="left:24.5px;top:171.3px" width="16" height="16" viewBox="0 0 16 16"><rect x="1.500" y="1.500" width="11" height="11" fill="#fdfdfd" stroke="#777" stroke-width="1"/><circle cx="12.600" cy="12.800" r="2.600" fill="#6DB36D" stroke="#3e8e3e" stroke-width="1"/></svg>
<svg class="abs" style="left:50px;top:171.3px" width="16" height="16" viewBox="0 0 16 16"><g fill="#4A86D0" stroke="#2F66AD" stroke-width=".4"><path d="M1.300 7.300C1.700 3.300 4.700 1.300 8 1.300c2 0 3.300.7 4.300 1.700l2-1.700v6h-6l2-2c-.7-.7-1.500-1-2.500-1c-1.700 0-2.900 1-3.200 3z"/><path d="M14.700 8.700c-.4 4-3.400 6-6.700 6c-2 0-3.300-.7-4.300-1.700l-2 1.700v-6h6l-2 2c.7.700 1.500 1 2.500 1c1.700 0 2.900-1 3.200-3z"/></g></svg>
<svg class="abs" style="left:74.5px;top:171.3px" width="16" height="16" viewBox="0 0 16 16"><path d="M1.500 2h13l-5 6v6.500l-3-1.500V8z" fill="#6F9FD8" stroke="#4A7FC0" stroke-width=".7"/><path d="M1 1.800h14" stroke="#EBC835" stroke-width="2.200"/></svg>
<svg class="abs" style="left:100.3px;top:171.3px" width="16" height="16" viewBox="0 0 16 16"><path d="M2.500 1.500h5M2.500 1.500v12M2.500 7h2M2.500 13h2" stroke="#999" stroke-width=".8" fill="none"/><rect x="3.800" y="5.300" width="3" height="3" fill="#F29A2E"/><rect x="3.800" y="11.300" width="3" height="3" fill="#F29A2E"/><path d="M11 1l4.500 5.500h-2.700v8h-3.600v-8H6.500z" fill="#4A7FC4" stroke="#2F5E9E" stroke-width=".6"/></svg>
<svg class="abs" style="left:124.6px;top:171.3px" width="16" height="16" viewBox="0 0 16 16"><circle cx="8" cy="8" r="7" fill="#6593CD" stroke="#4A7ABA" stroke-width=".6"/><text x="6" y="12.300" font-family="Liberation Serif,serif" font-style="italic" font-weight="bold" font-size="12" fill="#fff">i</text></svg>
<div class="white" style="left:17px;top:195px;width:268px;height:164px;border-left:none"></div>
<div class="abs" style="left:270px;top:196px;width:14px;height:162px;background:#e6e6e6;border-left:1px solid #c2c2c2"></div>
<div class="abs" style="left:270px;top:196px;width:14px;height:13px;background:#f6f6f6;border:1px solid #c2c2c2;border-top:none;border-right:none"></div>
<div class="abs" style="left:270px;top:209px;width:14px;height:51px;background:linear-gradient(90deg,#fdfdfd,#ececec);border:1px solid #b9b9b9;border-right:none"></div>
<div class="abs" style="left:270px;top:345px;width:14px;height:13px;background:#f6f6f6;border-left:1px solid #c2c2c2;border-top:1px solid #c2c2c2"></div>
<div class="abs" style="left:273.500px;top:200px;border-left:4px solid transparent;border-right:4px solid transparent;border-bottom:4.500px solid #444;width:0;height:0"></div>
<div class="abs" style="left:273.500px;top:350px;border-left:4px solid transparent;border-right:4px solid transparent;border-top:4.500px solid #444;width:0;height:0"></div>
<div class="abs" style="left:26px;top:201.5px;width:0;height:0;border-top:3.500px solid transparent;border-bottom:3.500px solid transparent;border-left:4px solid #444"></div>
<svg class="abs" style="left:40.7px;top:197px" width="16" height="16" viewBox="0 0 16 16"><path d="M8 .8l2.200 4.800l5.100.6l-3.800 3.500l1 5.100L8 12.300l-4.500 2.500l1-5.100L.700 6.200l5.100-.6z" fill="#FFF250" stroke="#DDAE1C" stroke-width=".9" stroke-linejoin="round"/></svg>

<div class="abs" style="left:26px;top:219.5px;width:0;height:0;border-top:3.500px solid transparent;border-bottom:3.500px solid transparent;border-left:4px solid #444"></div>
<svg class="abs" style="left:40.7px;top:215px" width="16" height="16" viewBox="0 0 16 16"><path d="M4 1.500h10.500v12.500H4z" fill="#f0f0f0" stroke="#9a9a9a" stroke-width=".8"/><path d="M4 1.500c-2 0-2.500 1.300-2.500 2V13c0 1.700 2.500 1.700 2.500 0z" fill="#dcdcdc" stroke="#9a9a9a" stroke-width=".8"/><path d="M8.500 1.500h3v6l-1.500-1.500l-1.500 1.500z" fill="#5A8AC6" stroke="#3F6EA8" stroke-width=".5"/></svg>

<div class="abs" style="left:26px;top:237.5px;width:0;height:0;border-top:3.500px solid transparent;border-bottom:3.500px solid transparent;border-left:4px solid #444"></div>
<svg class="abs" style="left:40.7px;top:233px" width="16" height="16" viewBox="0 0 16 16"><path d="M1.500 3h4l1 1.500h8v10h-13z" fill="#fcfcfc" stroke="#666" stroke-width=".9"/><path d="M4.500 9.500L8 6.500l3.500 3M5.500 9v3.500h5V9" fill="none" stroke="#333" stroke-width=".9"/></svg>

<div class="abs" style="left:26px;top:255.5px;width:0;height:0;border-top:3.500px solid transparent;border-bottom:3.500px solid transparent;border-left:4px solid #444"></div>
<svg class="abs" style="left:40.7px;top:251px" width="16" height="16" viewBox="0 0 16 16"><path d="M1.500 2h5l1 1.500h6.500v2" fill="none" stroke="#777" stroke-width=".9"/><path d="M1.500 2v12.500h13v-9h-6.500l-1-1.500h-5.500" fill="#fafafa" stroke="#777" stroke-width=".9"/></svg>

<div class="abs" style="left:26px;top:273.5px;width:0;height:0;border-top:3.500px solid transparent;border-bottom:3.500px solid transparent;border-left:4px solid #444"></div>
<svg class="abs" style="left:40.7px;top:269px" width="16" height="16" viewBox="0 0 16 16"><path d="M1.500 3h5l1 1.500h7v10h-13z" fill="#fafafa" stroke="#888" stroke-width=".9"/></svg>

<div class="abs" style="left:26px;top:291.5px;width:0;height:0;border-top:3.500px solid transparent;border-bottom:3.500px solid transparent;border-left:4px solid #444"></div>
<svg class="abs" style="left:40.7px;top:287px" width="16" height="16" viewBox="0 0 16 16"><path d="M1.500 3h5l1 1.500h7v10h-13z" fill="#fafafa" stroke="#888" stroke-width=".9"/></svg>

<div class="abs" style="left:26px;top:309.5px;width:0;height:0;border-top:3.500px solid transparent;border-bottom:3.500px solid transparent;border-left:4px solid #444"></div>
<svg class="abs" style="left:40.7px;top:305px" width="16" height="16" viewBox="0 0 16 16"><path d="M1.500 3h5l1 1.500h7v10h-13z" fill="#fafafa" stroke="#888" stroke-width=".9"/></svg>

<div class="abs" style="left:26px;top:327.5px;width:0;height:0;border-top:3.500px solid transparent;border-bottom:3.500px solid transparent;border-left:4px solid #444"></div>
<svg class="abs" style="left:40.7px;top:323px" width="16" height="16" viewBox="0 0 16 16"><path d="M1.500 3h5l1 1.500h7v10h-13z" fill="#fafafa" stroke="#888" stroke-width=".9"/></svg>

<div class="abs" style="left:26px;top:345.5px;width:0;height:0;border-top:3.500px solid transparent;border-bottom:3.500px solid transparent;border-left:4px solid #444"></div>
<svg class="abs" style="left:40.7px;top:341px" width="16" height="16" viewBox="0 0 16 16"><path d="M1.500 3h5l1 1.500h7v10h-13z" fill="#fafafa" stroke="#888" stroke-width=".9"/></svg>

<div class="abs" style="left:144px;top:362px;width:15px;height:1px;background-image:linear-gradient(90deg,#b5b5b5 1px,transparent 1px);background-size:2.500px 1px"></div>

<svg class="abs" style="left:258px;top:370px" width="25" height="11" viewBox="0 0 25 11"><rect x=".5" y=".5" width="10" height="10" rx="2" fill="#f8f8f8" stroke="#4a4a4a" stroke-width=".9"/><rect x="4.500" y="2.500" width="4" height="4" fill="none" stroke="#4a4a4a" stroke-width=".9"/><rect x="2.500" y="4.500" width="4" height="4" fill="#f8f8f8" stroke="#4a4a4a" stroke-width=".9"/><rect x="14.500" y=".5" width="10" height="10" rx="2" fill="#f8f8f8" stroke="#4a4a4a" stroke-width=".9"/><path d="M17.200 3.200l4.600 4.600M21.800 3.200l-4.600 4.600" stroke="#444" stroke-width="1.600"/></svg>
<svg class="abs" style="left:25px;top:392px" width="16" height="16" viewBox="0 0 16 16"><path d="M1 11l4-6l6 3l-3 6z" fill="#E8B92C"/><path d="M2 9l3-3l3 2z" fill="#D8673A"/><path d="M1 12l5-3l2 2z" fill="#5A8AC6"/><path d="M7 9l7-7l1.200 1.200l-6 7.500z" fill="#E59A3A" stroke="#b5701a" stroke-width=".5"/><path d="M5.500 8l3 3l-2 3l-3-4z" fill="#f1d9a8" stroke="#9a7a3a" stroke-width=".5"/></svg>
<svg class="abs" style="left:50px;top:392px" width="16" height="16" viewBox="0 0 16 16"><path d="M2.500 5.500h6v8h-6zM5 3.500h6v8M7.500 1.500h6v8" fill="#f4f4f4" stroke="#777" stroke-width=".9"/><rect x="9.500" y="9.500" width="6" height="6" rx="1.200" fill="#4A9A4A"/><path d="M12.500 10.500v4M10.500 12.500h4" stroke="#fff" stroke-width="1.200"/></svg>
<svg class="abs" style="left:75px;top:392px" width="16" height="16" viewBox="0 0 16 16"><path d="M.8 7.500C3 4 5.500 3 8 3s5 1 7.200 4.500C13 11 10.500 12 8 12S3 11 .8 7.500z" fill="#f6f6f6" stroke="#8a8a8a" stroke-width=".9"/><circle cx="8" cy="7.500" r="3" fill="#5A8AC6" stroke="#3F6EA8" stroke-width=".6"/><circle cx="8" cy="7.500" r="1.200" fill="#223"/><path d="M11.500 13h4.500l-2.250 2.500z" fill="#555"/></svg>
<svg class="abs" style="left:99.6px;top:392px" width="16" height="16" viewBox="0 0 16 16"><path d="M1.500 2h13l-5 6v6.500l-3-1.500V8z" fill="#6F9FD8" stroke="#4A7FC0" stroke-width=".7"/><path d="M1 1.800h14" stroke="#EBC835" stroke-width="2.200"/></svg>
<svg class="abs" style="left:124.6px;top:392px" width="16" height="16" viewBox="0 0 16 16"><text x="0" y="10" font-family="Liberation Serif,serif" font-size="18" fill="#7A2C8E">ε</text><path d="M8 9.500h7l-.8 6h-5.400z" fill="#cfcfcf" stroke="#999" stroke-width=".6"/><rect x="10" y="11" width="3" height="4.500" fill="#fff"/></svg>
<div class="dd" style="left:147.100px;top:398.500px;border-top-color:#555"></div>
<svg class="abs" style="left:162px;top:392px" width="16" height="16" viewBox="0 0 16 16"><path d="M2.500 1.500h5M2.500 1.500v12M2.500 7h2M2.500 13h2" stroke="#999" stroke-width=".8" fill="none"/><rect x="3.800" y="5.300" width="3" height="3" fill="#F29A2E"/><rect x="3.800" y="11.300" width="3" height="3" fill="#F29A2E"/><path d="M11 15l4.500-5.500h-2.700v-8h-3.600v8H6.500z" fill="#4A7FC4" stroke="#2F5E9E" stroke-width=".6"/></svg>
<svg class="abs" style="left:187.6px;top:392px" width="16" height="16" viewBox="0 0 16 16"><path d="M2.500 1.500h5M2.500 1.500v12M2.500 7h2M2.500 13h2" stroke="#999" stroke-width=".8" fill="none"/><rect x="3.800" y="5.300" width="3" height="3" fill="#F29A2E"/><rect x="3.800" y="11.300" width="3" height="3" fill="#F29A2E"/><path d="M11 1l4.500 5.500h-2.700v8h-3.600v-8H6.500z" fill="#4A7FC4" stroke="#2F5E9E" stroke-width=".6"/></svg>
<svg class="abs" style="left:211.7px;top:392px" width="16" height="16" viewBox="0 0 16 16"><rect x="1.500" y="1.500" width="11.500" height="11.500" fill="#fdfdfd" stroke="#777" stroke-width="1"/><rect x="9.500" y="10.500" width="6" height="4" rx="1.300" fill="#E23A3A"/><path d="M10.800 12.500h3.400" stroke="#fff" stroke-width="1"/></svg>
<div class="white" style="left:17px;top:416px;width:268px;height:227px;border-left:none"></div>
<div class="abs" style="left:17px;top:417px;width:267px;height:18px;background:#f0f0f0"></div>
<svg class="abs" style="left:41px;top:420px" width="13" height="13" viewBox="0 0 13 13"><rect x=".5" y=".5" width="12" height="12" fill="#fff" stroke="#b4b4b4"/><path d="M2.400 6.300l2.700 3.600l5.300-7.400" fill="none" stroke="#0a0a0a" stroke-width="1.900"/></svg>
<svg class="abs" style="left:41px;top:438px" width="13" height="13" viewBox="0 0 13 13"><rect x=".5" y=".5" width="12" height="12" fill="#fff" stroke="#b4b4b4"/><path d="M2.400 6.300l2.700 3.600l5.300-7.400" fill="none" stroke="#0a0a0a" stroke-width="1.900"/></svg>
<svg class="abs" style="left:41px;top:456px" width="13" height="13" viewBox="0 0 13 13"><rect x=".5" y=".5" width="12" height="12" fill="#fff" stroke="#b4b4b4"/><path d="M2.400 6.300l2.700 3.600l5.300-7.400" fill="none" stroke="#0a0a0a" stroke-width="1.900"/></svg>
<div class="abs" style="left:65.600px;top:423.200px;width:6.400px;height:6.400px;border-radius:50%;background:#6167AE"></div>

<div class="abs" style="left:61px;top:443px;width:16px;height:2px;background:#aaa29a"></div>

<div class="abs" style="left:61px;top:454px;width:16px;height:16px;background:#AE9292;border:1px solid #6a5858"></div>

<svg class="abs" style="left:264px;top:418px" width="16" height="17" viewBox="0 0 16 17"><rect x=".5" y=".5" width="15" height="16" rx="2" fill="#f8f8f8" stroke="#d5d5d5"/><rect x="2.500" y="5" width="11" height="7" rx="1" fill="none" stroke="#6b8fb8" stroke-width="1.300"/><path d="M4.500 3.500v1.500M6.500 3.500v1.500M8.500 3.500v1.500M10.500 3.500v1.500M4.500 12v1.500M6.500 12v1.500M8.500 12v1.500M10.500 12v1.500" stroke="#6b8fb8" stroke-width="1"/></svg>
<div class="abs" style="left:287px;top:391px;width:1px;height:18px;background-image:linear-gradient(#b5b5b5 1px,transparent 1px);background-size:1px 2.500px"></div>
<div id="mapframe"></div>
<svg class="map" width="844" height="496" viewBox="292 146 844 496">
<rect x="292" y="146" width="844" height="496" fill="#AF9393"/>
<g fill="none" stroke="#2b2b2b" stroke-width="1">
<polyline points="522.1,145 524.3,240 528.5,355 528.5,363.4 530.1,425.3 531,425.8 566.1,451.4 615.4,450.9 673,440.4 1008.9,376.7 1136.3,342"/>
<polyline points="566.1,451.4 566.1,520.3 553.5,530 539.3,540"/>
<polyline points="381.1,611.4 376.9,614.4 357.7,632.3 358.9,642"/>
</g>
<polyline points="539.3,540 480,566.8 381.1,611.4" fill="none" stroke="#2b2b2b" stroke-width="2.6"/>
<polyline points="539.3,540 480,566.8 381.1,611.4" fill="none" stroke="#fff" stroke-width="1"/>
<g fill="none" stroke="#F4EE18" stroke-width="1" stroke-linejoin="round">
<polyline points="314,145 311.7,170.7 303.7,285.9"/>
<polyline points="291.7,169 311.7,170.7"/>
<polyline points="291.7,284.6 303.7,285.9 316.7,286.9 405.5,284.9 440.3,288.6 480.3,290.2 486.7,289.3 495,285.1 505.1,276.8 514.8,264.7"/>
<polyline points="405.5,284.9 455.6,304.9 480,321 486.7,326.1 507.9,349.8 526.8,364.3 531.8,365.8"/>
<polyline points="316.7,286.9 311.7,358.7 306.7,417.7"/>
<polyline points="311.7,358.7 423.6,363"/>
<polyline points="455.6,304.9 463.6,300.3 480,298.5 486.7,297.3 501.7,299.3 519.3,313.5 529.3,330.2 533.8,351.5"/>
<polyline points="455.6,304.9 443.6,315.3 433.6,335.3 435.2,358.7 443.6,375 453.6,383.3 473.6,392.4 527.8,387.7"/>
<polyline points="483.7,145 507.7,148.3 511.7,200.8 514.3,240 514.8,264.7"/>
<polyline points="514.8,264.7 528.8,271.8 535.1,278.4 538.8,285.6 550.9,303.8 565.9,328.7 573.6,341.9 575.3,343.4 578.6,358.4 579.8,371.1 580.8,384.6 580.8,394.5 581.9,398.9 581.9,408.9 578.6,423.6 575.9,428.6"/>
<polyline points="523.7,145 524.7,199.8 526.8,240 528.8,271.8 531.8,323.6 533.8,351.5 531.8,365.8 527.8,387.7 524.8,399.7 515.8,435.6 510.1,448.4 486.9,483.8 480,488.5 467.1,506.9 443.7,535 440.4,538.4 432,543.7 415.3,555.9 402.8,561.4 376.9,573.4 336,598.5 302.9,628.8 291.7,641.1"/>
<polyline points="531.7,155 534.7,199.8 537.2,240 538.8,285.6 542.8,322.7 543.5,351.7 541.8,367.8 538.8,386.8 536.8,398.7 528.8,433.6 525.1,443.4 505.1,476.8 495,493.5 480,511.9 472.2,523.6 463.8,535 452.9,550.1 439.9,557.6 422,570.1 412.8,574.8 348.5,609.9 312.9,638.6 310.1,642"/>
<polyline points="547.1,145 547.8,198.8 553.5,240 559.9,274.8 561.9,288.8 565.9,328.7"/>
<polyline points="511.7,200.8 524.7,199.8 534.7,199.8 547.8,198.8"/>
<polyline points="566.1,284.6 573.6,280.9 588.6,278.8 603.7,278.1 610.3,279.8 627.1,290.1 636.2,301.8 642.9,320.2 643.4,326.9 640.9,334.8 637.1,346.7 630.4,357.6 617,367.6 607.8,372.8"/>
<polyline points="559.9,274.8 566.1,284.6 571.9,296.8 588.6,308.5 640.9,334.8 673,347.5 706.8,358.4 751.9,365.8 782.8,372.8 797,374.8"/>
<polyline points="561.9,288.8 555.2,295.1 550.9,303.8 542.8,322.7"/>
<polyline points="616.5,145 613.9,208.4 617.9,226.1 675,236.8 740.1,251.2"/>
<polyline points="541.8,367.8 554.4,370.9 579.8,371.1 607.8,372.8 673,373.1 709.8,372.8 782.8,373.1"/>
<polyline points="527.8,387.7 538.8,386.8 580.8,384.6 673,383.1 706.8,382.8 777,379.3 797,376 863,365.1 1060,335.3 1069.8,335 1136.3,323.6"/>
<polyline points="291.7,416.7 306.7,417.7 318,418.7 362.8,419.7 395.8,419.7 480,406.9 507.9,401.9 524.8,399.7 536.8,398.7 558.9,395.7 580.8,394.5 597,393.5 673,394 711.8,394.7 783.6,391 812.9,385.8 890.7,381.7 942.1,375 1136.3,344.7"/>
<polyline points="558.9,395.7 581.9,398.9 593.6,401 615.4,411.9 624.1,427.8 626.2,436.7 625.4,445.1 620.9,462.9 610.3,474.3 594.5,483.5 573.8,483.8"/>
<polyline points="581.9,408.9 587,415.2 610,426.6"/>
<polyline points="438.7,499.9 447.1,483.5 457.1,468.5 468.8,454.3 480,445.1 486.7,441.7 505.1,436.7 515.8,435.9 528.8,433.7 575.9,428.7 610,427 624.1,427.9 639.9,428.7 673,420.8 688.4,416.1 701.7,416.1 717.7,420.7 725.8,417.7"/>
<polyline points="639.9,428.7 652.1,440.9 663.8,445.9"/>
<polyline points="663.8,445.9 673,475.1 687.7,528.9 695.7,594 704,622.9 706.1,642"/>
<polyline points="573.8,483.8 588.6,475.1 620.9,462.9 663.8,445.9 673,441.7 717.7,420.7"/>
<polyline points="725.8,417.7 777,396 797,389.3 812.9,385.8"/>
<polyline points="573.8,483.8 535.8,507.7 503.4,535 483,546.7 471,554.7 448.8,572.9 422,587.7 383.6,607.7 363.5,618.6 337.6,642"/>
<polyline points="535.8,507.7 541.8,523.6 542.7,530 548.9,552.9 554.9,568.8 556.9,610.2 558.9,613.6 561.9,619.9 563.2,642"/>
<polyline points="548.9,552.9 673,531.3 687.7,528.9"/>
<polyline points="480,578.8 554.9,568.8"/>
<polyline points="481.7,624.9 561.9,619.9"/>
<polyline points="558.9,613.6 563.6,612.2 668.8,624.9 675,624.9 704,622.9 771.8,613.3 824.9,608.9 860.6,606.9 904.7,595.9 943.8,585.9 1017.2,562.5 1060,560.2 1063.8,560.3 1136.3,579.3"/>
<polyline points="629.1,589.5 673,592.7 695.7,593.9"/>
<polyline points="470.6,555 477.6,578.7 481.7,624.9 483,642"/>
<polyline points="422,587.7 431.2,642"/>
<polyline points="418.7,531.3 432,543.7 439.9,557.6 448.8,572.9"/>
<polyline points="393.6,547.5 402.8,561.4 412.8,574.8 422,587.7"/>
<polyline points="408.8,496 405.3,520.3 397,544.7"/>
<polyline points="418.7,531.3 407,538.4 397,544.7 393.6,547.5 373.6,568.8 340.1,579.3 312.6,583.5 295,590.7 291.7,592.2"/>
<polyline points="438.7,499.9 430.9,515.9 418.7,530.6"/>
<polyline points="408.8,496 417,505.2 430.9,515.9"/>
<polyline points="438.7,499.9 452.1,502.2 464.6,497.7 486.9,483.8"/>
<polyline points="507.9,401.9 495,409.9 480,413.1 448.8,420 429.5,424.2 419.5,433.4 410.3,449.2 410.7,467.6 416.2,482.7 428.7,494.4 438.7,499.9"/>
<polyline points="362.7,420.8 371.9,424.2 385.3,435.9 394.9,446.4 400.3,470.1 408.8,496"/>
<polyline points="317.9,420 316.7,441.7 316.7,481"/>
<polyline points="292,481.3 316.7,481 384.9,481.5"/>
<polyline points="527.8,437 540.2,456.8 553.5,471.8 561.9,479.3 573.8,483.8"/>
<polyline points="723.4,145 726.8,178.4 731.1,233.5 748.5,265.2 753.5,288.6 756.1,318.6 755.7,330 755.2,346.7 751.9,365.8"/>
<polyline points="810.2,146 768.5,151 761.1,155 758.5,161.7 762.5,184.4 771.8,231.8 788.9,346.7 797.2,374"/>
<polyline points="872,186.7 883.7,185.7"/>
<polyline points="870.3,241.8 884.7,332"/>
<polyline points="788.9,346.7 884.7,332 940.4,324.3"/>
<polyline points="1004.9,145 1008.9,249.8 1009.6,301.9 1015.6,305.9 1062.5,306.9"/>
<polyline points="1008.9,249.8 1059.8,248.8"/>
<polyline points="1053.1,145 1057.8,206.8 1059.8,248.8 1062.5,306.9 1069.8,335"/>
<polyline points="1057.8,206.8 1136.3,200.4"/>
<polyline points="1059.8,248.8 1106.6,262.9"/>
<polyline points="812.6,385.7 825.3,605.1 824.9,608.9"/>
<polyline points="890.7,381.7 904.7,595.7"/>
<polyline points="725.8,417.7 727.8,451.8"/>
<polyline points="690,462.5 727.8,451.8 756.8,451.8 766.8,453.5 769.5,471.8 775.5,558.6"/>
<polyline points="860.6,606.9 860.6,642"/>
<polyline points="1069.2,528.9 1136.3,550.3"/>
<polyline points="1136.3,605.9 1127.3,622.6 1118.9,642"/>
<polyline points="1136.3,617.6 1130.6,629.3 1126.6,642"/>
<polyline points="1136.3,629.3 1132.3,642"/>
</g>
<g fill="#90599E" stroke="#1f1f1f" stroke-width="1.1">
<circle cx="311.7" cy="170.7" r="3.45"/>
<circle cx="507.7" cy="148.3" r="3.45"/>
<circle cx="531.7" cy="155" r="3.45"/>
<circle cx="511.7" cy="200.8" r="3.45"/>
<circle cx="524.7" cy="199.8" r="3.45"/>
<circle cx="534.7" cy="199.8" r="3.45"/>
<circle cx="547.7" cy="198.8" r="3.45"/>
<circle cx="514.8" cy="264.7" r="3.45"/>
<circle cx="528.8" cy="271.8" r="3.45"/>
<circle cx="559.9" cy="274.8" r="3.45"/>
<circle cx="538.8" cy="285.6" r="3.45"/>
<circle cx="566.1" cy="284.6" r="3.45"/>
<circle cx="561.9" cy="288.8" r="3.45"/>
<circle cx="303.7" cy="285.9" r="3.45"/>
<circle cx="316.7" cy="286.9" r="3.45"/>
<circle cx="405.5" cy="284.9" r="3.45"/>
<circle cx="455.6" cy="304.9" r="3.45"/>
<circle cx="550.9" cy="303.8" r="3.45"/>
<circle cx="542.8" cy="322.7" r="3.45"/>
<circle cx="565.9" cy="328.7" r="3.45"/>
<circle cx="640.9" cy="334.8" r="3.45"/>
<circle cx="507.9" cy="349.8" r="3.45"/>
<circle cx="533.8" cy="351.5" r="3.45"/>
<circle cx="311.7" cy="358.7" r="3.45"/>
<circle cx="531.8" cy="365.8" r="3.45"/>
<circle cx="541.8" cy="367.8" r="3.45"/>
<circle cx="579.8" cy="371.1" r="3.45"/>
<circle cx="607.8" cy="372.8" r="3.45"/>
<circle cx="580.8" cy="384.6" r="3.45"/>
<circle cx="527.8" cy="387.7" r="3.45"/>
<circle cx="538.8" cy="386.8" r="3.45"/>
<circle cx="580.8" cy="394.5" r="3.45"/>
<circle cx="581.9" cy="398.8" r="3.45"/>
<circle cx="558.9" cy="395.7" r="3.45"/>
<circle cx="507.9" cy="401.9" r="3.45"/>
<circle cx="524.8" cy="399.7" r="3.45"/>
<circle cx="536.8" cy="398.7" r="3.45"/>
<circle cx="581.9" cy="408.9" r="3.45"/>
<circle cx="575.9" cy="428.6" r="3.45"/>
<circle cx="610" cy="426.6" r="3.45"/>
<circle cx="624" cy="427.8" r="3.45"/>
<circle cx="639.9" cy="428.6" r="3.45"/>
<circle cx="515.8" cy="435.6" r="3.45"/>
<circle cx="527.8" cy="437" r="3.45"/>
<circle cx="528.8" cy="433.6" r="3.45"/>
<circle cx="663.8" cy="445.9" r="3.45"/>
<circle cx="620.9" cy="463" r="3.45"/>
<circle cx="573.8" cy="483.8" r="3.45"/>
<circle cx="486.9" cy="483.8" r="3.45"/>
<circle cx="535.8" cy="507.7" r="3.45"/>
<circle cx="306.7" cy="418" r="3.45"/>
<circle cx="317.9" cy="418.7" r="3.45"/>
<circle cx="362.7" cy="419.7" r="3.45"/>
<circle cx="395.6" cy="419.7" r="3.45"/>
<circle cx="316.7" cy="481" r="3.45"/>
<circle cx="408.8" cy="496" r="3.45"/>
<circle cx="438.7" cy="499.9" r="3.45"/>
<circle cx="430.9" cy="515.9" r="3.45"/>
<circle cx="418.7" cy="530.6" r="3.45"/>
<circle cx="397" cy="544.7" r="3.45"/>
<circle cx="393.6" cy="547.5" r="3.45"/>
<circle cx="432" cy="543.7" r="3.45"/>
<circle cx="402.8" cy="561.4" r="3.45"/>
<circle cx="439.9" cy="557.6" r="3.45"/>
<circle cx="412.8" cy="574.8" r="3.45"/>
<circle cx="448.8" cy="572.9" r="3.45"/>
<circle cx="422" cy="587.7" r="3.45"/>
<circle cx="471" cy="554.7" r="3.45"/>
<circle cx="478" cy="578.8" r="3.45"/>
<circle cx="481.4" cy="624.9" r="3.45"/>
<circle cx="295" cy="590.7" r="3.45"/>
<circle cx="302.9" cy="628.8" r="3.45"/>
<circle cx="312.9" cy="638.6" r="3.45"/>
<circle cx="548.9" cy="552.9" r="3.45"/>
<circle cx="554.9" cy="568.8" r="3.45"/>
<circle cx="558.9" cy="613.6" r="3.45"/>
<circle cx="561.9" cy="619.9" r="3.45"/>
<circle cx="1057.8" cy="206.6" r="3.45"/>
<circle cx="1008.8" cy="249.8" r="3.45"/>
<circle cx="1059.8" cy="248.8" r="3.45"/>
<circle cx="1062.5" cy="306.9" r="3.45"/>
<circle cx="1069.8" cy="335" r="3.45"/>
<circle cx="884.6" cy="332" r="3.45"/>
<circle cx="788.8" cy="346.7" r="3.45"/>
<circle cx="751.9" cy="365.8" r="3.45"/>
<circle cx="709.8" cy="372.8" r="3.45"/>
<circle cx="782.8" cy="372.8" r="3.45"/>
<circle cx="797" cy="374.8" r="3.45"/>
<circle cx="706.8" cy="382.8" r="3.45"/>
<circle cx="812.9" cy="385.8" r="3.45"/>
<circle cx="711.8" cy="394.7" r="3.45"/>
<circle cx="717.8" cy="420.7" r="3.45"/>
<circle cx="725.8" cy="417.7" r="3.45"/>
<circle cx="890.7" cy="381.7" r="3.45"/>
<circle cx="727.8" cy="451.8" r="3.45"/>
<circle cx="687.7" cy="528.9" r="3.45"/>
<circle cx="695.7" cy="594" r="3.45"/>
<circle cx="704" cy="622.9" r="3.45"/>
<circle cx="824.9" cy="608.9" r="3.45"/>
<circle cx="860.6" cy="606.9" r="3.45"/>
<circle cx="904.7" cy="595.8" r="3.45"/>
</g>
</svg>
<svg class="abs" style="left:292px;top:146px" width="844" height="496" viewBox="292 146 844 496">
<defs><filter id="sh" x="-20%" y="-20%" width="150%" height="150%"><feGaussianBlur stdDeviation="2.400"/></filter></defs>
<g filter="url(#sh)" opacity=".78" transform="translate(5,5)">
<rect x="695" y="183.500" width="177.300" height="34.300" rx="4.500" fill="#000"/>
<line x1="776.800" y1="217" x2="724.500" y2="341" stroke="#000" stroke-width="3.200"/>
<path d="M715.300 333.200L736.500 342.300L717 358.500z" fill="#000"/>
</g>
<line x1="776.800" y1="217" x2="724.500" y2="341" stroke="#FA4040" stroke-width="3"/>
<path d="M716.300 334.500L734.800 342.500L717.800 356.600z" fill="#FF0000" stroke="#FA4444" stroke-width="2.200" stroke-linejoin="round"/>
<rect x="696.300" y="184.800" width="174.700" height="31.700" rx="3.500" fill="#fff" stroke="#F84444" stroke-width="2.600"/>
<text x="701.900" y="208.400" font-family="Liberation Sans,sans-serif" font-size="23.200" fill="#F54242">Not Intersection</text>
</svg>
<!-- hand cursor -->
<svg class="abs" style="left:758px;top:446px" width="23" height="28" viewBox="0 0 23 28"><path d="M7.100 16.600V5.200a1.750 1.750 0 0 1 3.500 0V3.900a1.550 1.550 0 0 1 3.100 0V4.800a1.500 1.500 0 0 1 3 0V6.800a1.650 1.650 0 0 1 3.300 0V18.500c0 4-2.500 7.500-7 7.500c-3.500 0-5.500-2.500-7.500-5l-2.800-3.600c-1.200-1.600.6-3.400 2.200-2.400z" fill="#fff" stroke="#0a0a0a" stroke-width="1" stroke-linejoin="round"/><path d="M10.600 5V13M13.700 4.500V13M16.700 5.500V13" stroke="#0a0a0a" stroke-width=".9"/></svg>

<div class="abs" style="left:21px;top:646px;width:200px;height:22px;background:#fff;border:1px solid #b0b0b0;border-radius:3px"></div>
<svg class="abs" style="left:29.500px;top:651px" width="13" height="13" viewBox="0 0 13 13"><circle cx="5" cy="5" r="3.900" fill="none" stroke="#858585" stroke-width="1.300"/><path d="M7.800 7.800l4.200 4.200" stroke="#858585" stroke-width="1.500"/></svg>


<div class="abs" style="left:346px;top:646px;width:122px;height:22px;background:#fff;border:1px solid #b0b0b0;border-radius:3px"></div>

<svg class="abs" style="left:472px;top:647.500px" width="18" height="18" viewBox="0 0 18 18"><g transform="rotate(-32 8.500 9.500)"><rect x="3.800" y="2" width="9.400" height="14.500" rx="4.400" fill="#fff" stroke="#111" stroke-width="1.500"/><path d="M3.800 8.300h9.400" stroke="#111" stroke-width="1.300"/><path d="M5 3.500c1-1.200 2.300-1.300 3-1.300v5.500H4.300V5.500z" fill="#222"/><path d="M8.800 2.200v6" stroke="#111" stroke-width="1.100"/><path d="M10 3l2 2.500v2h-2z" fill="#777"/><circle cx="8.500" cy="12.300" r="1.700" fill="#ddd" stroke="#111" stroke-width="1"/></g><path d="M12.500 3.300l3.300-2.300M1 10.500l1.800-.6" stroke="#222" stroke-width="1" stroke-dasharray="1.200 .9"/></svg>

<div class="abs" style="left:530.500px;top:646px;width:80.500px;height:22px;background:#fff;border:1px solid #b0b0b0;border-radius:3px"></div>
<div class="abs" style="left:590.500px;top:647px;width:1px;height:20px;background:#c9c9c9"></div>
<div class="dd" style="left:596px;top:654.500px"></div>

<svg class="abs" style="left:622px;top:649px" width="14" height="16" viewBox="0 0 14 16"><path d="M3.500 7V4.800a3.500 3.500 0 0 1 7 0V7" fill="none" stroke="#8a8a8a" stroke-width="1.800"/><rect x="1" y="6.500" width="12" height="9" rx="1.500" fill="#5e5e5e"/></svg>

<div class="abs" style="left:691.500px;top:647px;width:87px;height:20px;background:#fff;border:1px solid #b0b0b0;border-radius:3px"></div>

<div class="abs" style="left:764.5px;top:648px;width:1px;height:18px;background:#d0d0d0"></div><div class="abs" style="left:767.5px;top:651.500px;width:0;height:0;border-left:3.500px solid transparent;border-right:3.500px solid transparent;border-bottom:4px solid #444"></div><div class="abs" style="left:767.5px;top:658.500px;width:0;height:0;border-left:3.500px solid transparent;border-right:3.500px solid transparent;border-top:4px solid #444"></div>

<div class="abs" style="left:838px;top:647px;width:83.500px;height:20px;background:#fff;border:1px solid #b0b0b0;border-radius:3px"></div>

<div class="abs" style="left:907.5px;top:648px;width:1px;height:18px;background:#d0d0d0"></div><div class="abs" style="left:910.5px;top:651.500px;width:0;height:0;border-left:3.500px solid transparent;border-right:3.500px solid transparent;border-bottom:4px solid #444"></div><div class="abs" style="left:910.5px;top:658.500px;width:0;height:0;border-left:3.500px solid transparent;border-right:3.500px solid transparent;border-top:4px solid #444"></div>
<svg class="abs" style="left:928px;top:651px" width="13" height="13" viewBox="0 0 13 13"><rect x=".5" y=".5" width="12" height="12" fill="#fff" stroke="#8a8a8a"/><path d="M2.400 6.300l2.700 3.600l5.300-7.400" fill="none" stroke="#0a0a0a" stroke-width="1.900"/></svg>

<svg class="abs" style="left:999px;top:649.500px" width="16" height="16" viewBox="0 0 16 16"><g fill="none" stroke="#666" stroke-width=".9"><ellipse cx="8" cy="8" rx="6.800" ry="6.200"/><ellipse cx="8" cy="8" rx="3.200" ry="6.200"/><path d="M8 1.800v12.400M1.200 8h13.600M2.200 4.800h11.600M2.200 11.200h11.600"/></g><path d="M1 8l7-7.200l7 7.200" fill="none" stroke="#888" stroke-width=".7"/></svg>

<svg class="abs" style="left:1090.500px;top:650.500px" width="17.500" height="15.500" viewBox="0 0 17 15"><ellipse cx="8" cy="6.300" rx="7.800" ry="6" fill="#5a5a5a"/><path d="M9 11l5.500 3.500l-1.500-5z" fill="#5a5a5a"/><circle cx="4.500" cy="6.300" r="1.200" fill="#fff"/><circle cx="8" cy="6.300" r="1.200" fill="#fff"/><circle cx="11.500" cy="6.300" r="1.200" fill="#fff"/></svg>
<div class="abs" style="left:1134px;top:668px;width:1.500px;height:1.500px;background:#bdbdbd"></div><div class="abs" style="left:1134px;top:665px;width:1.500px;height:1.500px;background:#bdbdbd"></div><div class="abs" style="left:1134px;top:662px;width:1.500px;height:1.500px;background:#bdbdbd"></div><div class="abs" style="left:1131px;top:668px;width:1.500px;height:1.500px;background:#bdbdbd"></div><div class="abs" style="left:1131px;top:665px;width:1.500px;height:1.500px;background:#bdbdbd"></div><div class="abs" style="left:1128px;top:668px;width:1.500px;height:1.500px;background:#bdbdbd"></div>
<span id="ttl" class="abs tx " style="left:46.3px;top:25.9px;color:#fff">*Untitled Project — QGIS [New1]</span>
<span id="m0" class="abs tx " style="left:27.1px;top:49.9px;">Pro<u>j</u>ect</span>
<span id="m1" class="abs tx " style="left:78.3px;top:49.9px;"><u>E</u>dit</span>
<span id="m2" class="abs tx " style="left:112.1px;top:49.9px;"><u>V</u>iew</span>
<span id="m3" class="abs tx " style="left:150.9px;top:49.9px;"><u>L</u>ayer</span>
<span id="m4" class="abs tx " style="left:193.3px;top:49.9px;"><u>S</u>ettings</span>
<span id="m5" class="abs tx " style="left:249.6px;top:49.9px;"><u>P</u>lugins</span>
<span id="m6" class="abs tx " style="left:302.2px;top:49.9px;">Vect<u>o</u>r</span>
<span id="m7" class="abs tx " style="left:349.4px;top:49.9px;"><u>R</u>aster</span>
<span id="m8" class="abs tx " style="left:395.7px;top:49.9px;"><u>D</u>atabase</span>
<span id="m9" class="abs tx " style="left:457.5px;top:49.9px;"><u>W</u>eb</span>
<span id="m10" class="abs tx " style="left:495.4px;top:49.9px;"><u>M</u>esh</span>
<span id="m11" class="abs tx " style="left:538.4px;top:49.9px;">Pro<u>c</u>essing</span>
<span id="m12" class="abs tx " style="left:609.3px;top:49.9px;"><u>H</u>elp</span>
<span id="pb" class="abs tx " style="left:21.3px;top:148px;">Browser</span>
<span id="r0" class="abs tx " style="left:63.3px;top:198.6px;">Favorites</span>
<span id="r1" class="abs tx " style="left:63.3px;top:216.6px;">Spatial Bookmarks</span>
<span id="r2" class="abs tx " style="left:63.3px;top:234.6px;">Home</span>
<span id="r3" class="abs tx " style="left:63.3px;top:252.6px;">C:&#92;</span>
<span id="r4" class="abs tx " style="left:63.3px;top:270.6px;">D:&#92;</span>
<span id="r5" class="abs tx " style="left:63.3px;top:288.6px;">E:&#92;</span>
<span id="r6" class="abs tx " style="left:63.3px;top:306.6px;">F:&#92;</span>
<span id="r7" class="abs tx " style="left:63.3px;top:324.6px;">G:&#92;</span>
<span id="r8" class="abs tx " style="left:63.3px;top:342.6px;">H:&#92;</span>
<span id="pl" class="abs tx " style="left:21.3px;top:369.1px;">Layers</span>
<span id="b1" class="abs tx " style="left:83.3px;top:420.1px;font-weight:bold;text-decoration:underline;text-underline-offset:1.5px">Intersections</span>
<span id="b2" class="abs tx " style="left:86.3px;top:437.9px;font-weight:bold">chennai_roads</span>
<span id="b3" class="abs tx " style="left:86.3px;top:455.9px;font-weight:bold">New Wards from Oct 2011</span>
<span id="loc" class="abs tx st" style="left:49.5px;top:650.5px;color:#777">Type to locate (Ctrl+K)</span>
<span id="s1" class="abs tx st" style="left:289.5px;top:650.5px;">Coordinate</span>
<span id="s2" class="abs tx st" style="left:352.6px;top:650.5px;">80.205838,13.007107</span>
<span id="s3" class="abs tx st" style="left:501.4px;top:650.5px;">Scale</span>
<span id="s4" class="abs tx st" style="left:534.7px;top:650.5px;">1:3312</span>
<span id="s5" class="abs tx st" style="left:643.8px;top:650.5px;">Magnifier</span>
<span id="s6" class="abs tx st" style="left:697.1px;top:650.5px;">100%</span>
<span id="s7" class="abs tx st" style="left:787.2px;top:650.5px;">Rotation</span>
<span id="s8" class="abs tx st" style="left:842.7px;top:650.5px;">0.0 °</span>
<span id="s9" class="abs tx st" style="left:946.4px;top:650.5px;">Render</span>
<span id="s10" class="abs tx st" style="left:1018.6px;top:650.5px;">EPSG:4326</span>
</body>
</html>
